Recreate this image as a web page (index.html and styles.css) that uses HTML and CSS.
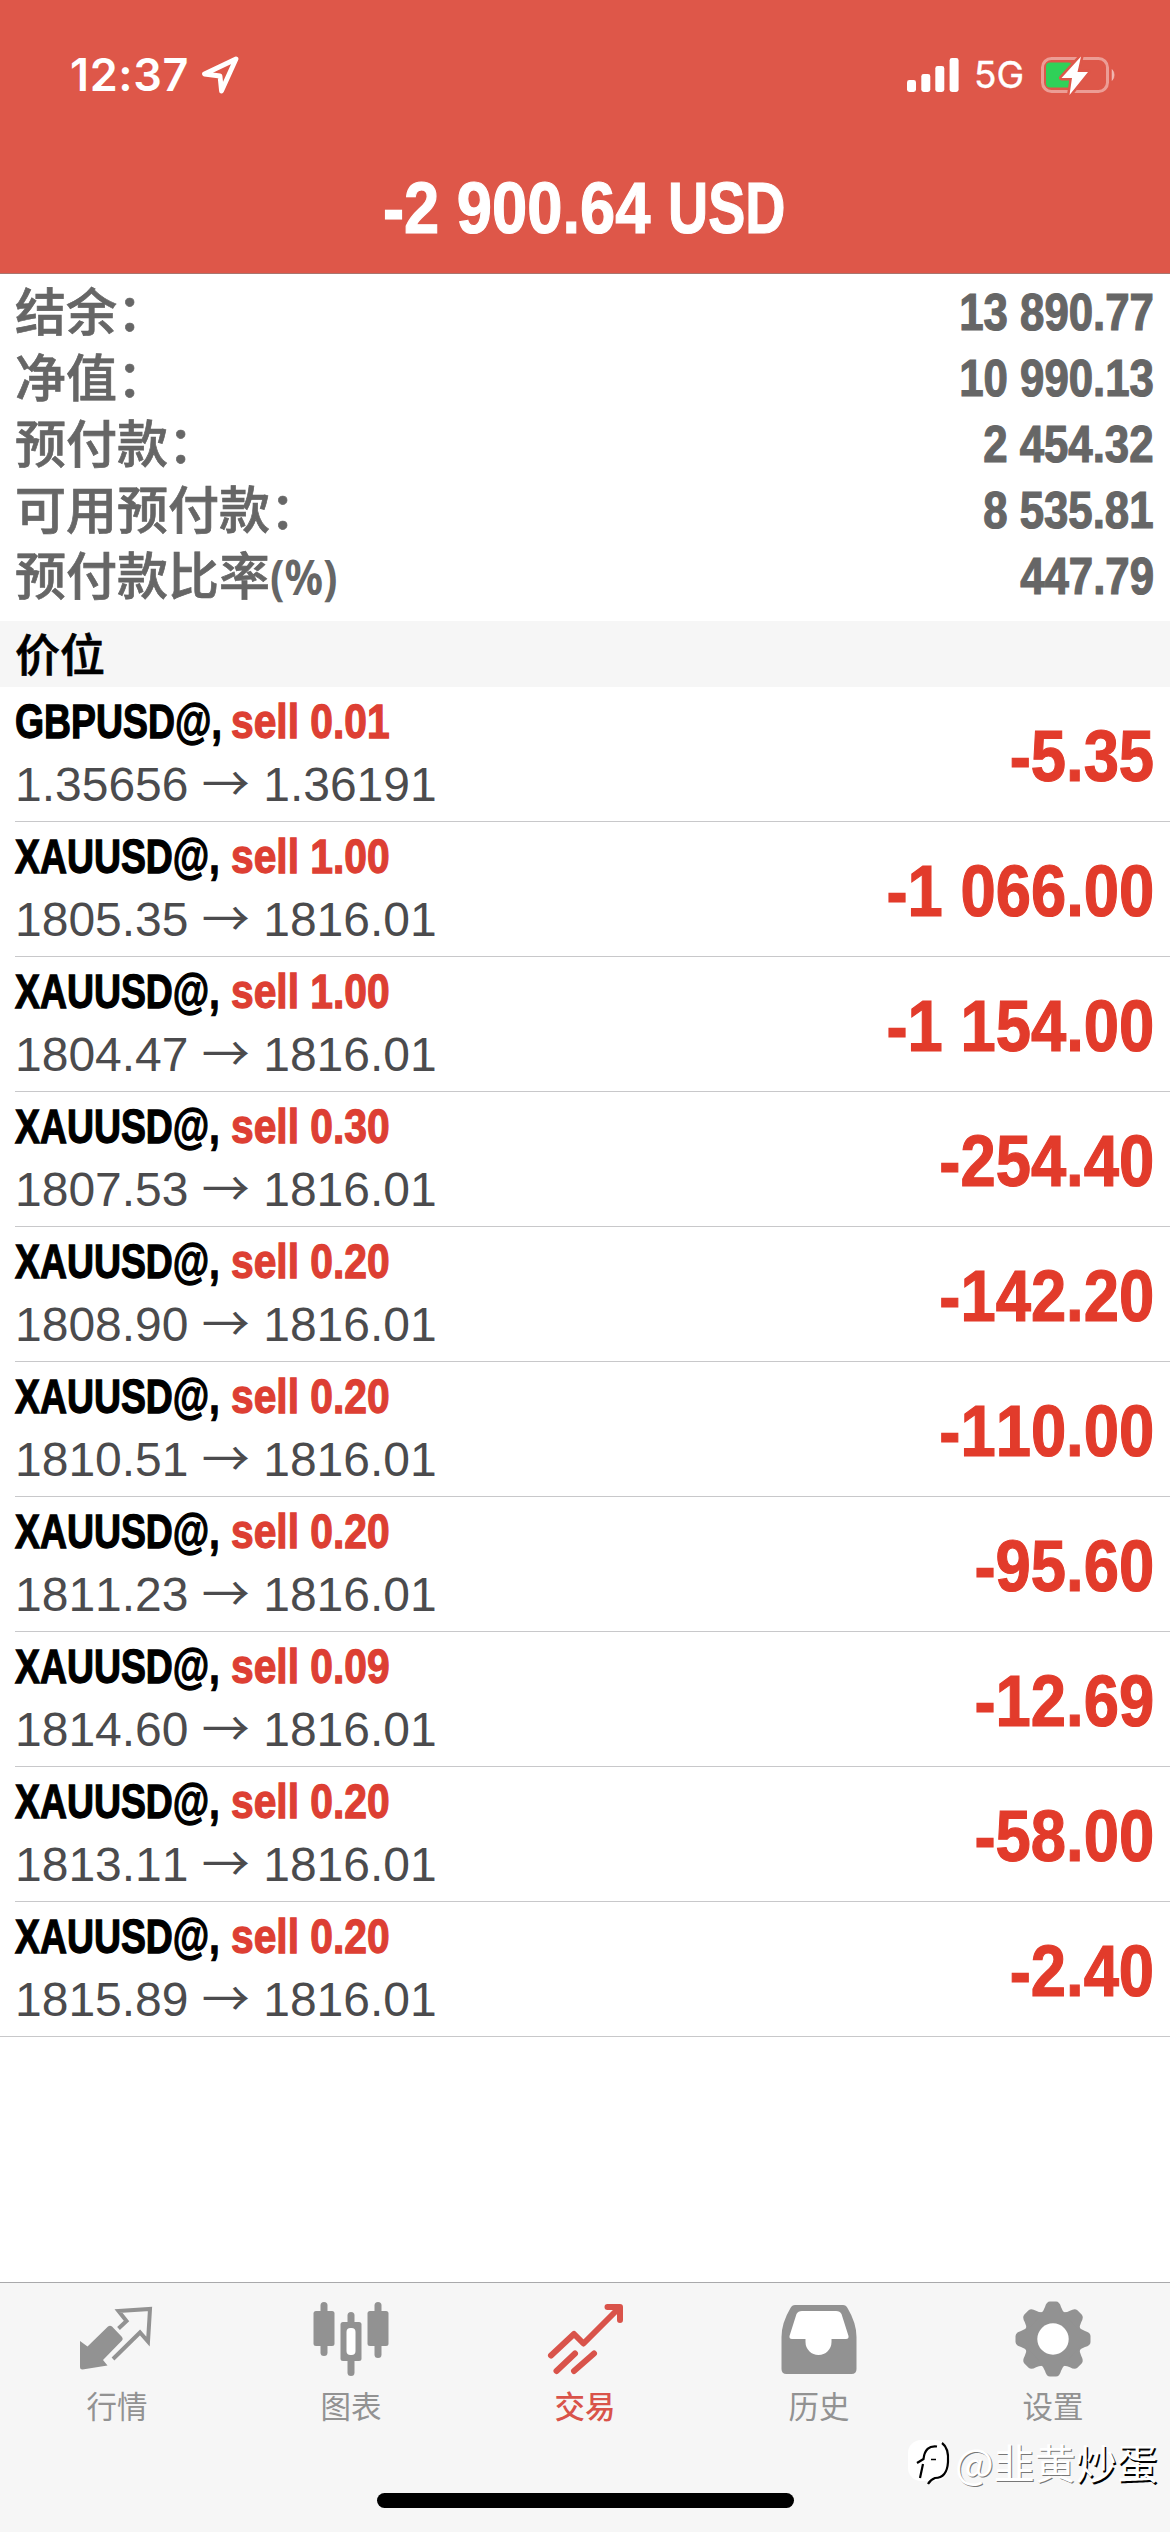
FILE: index.html
```html
<!DOCTYPE html>
<html lang="zh-CN">
<head>
<meta charset="utf-8">
<title>交易</title>
<link rel="stylesheet" href="styles.css">
</head>
<body>
<div class="app">
  <header class="header">
    <div class="status">
      <div class="status-left">
        <span class="clock">12:37</span>
        <svg class="loc" width="38" height="38" viewBox="0 0 38 38"><path d="M35 3 L3.500 18 L19 20 L20.500 35 Z" fill="none" stroke="#fff" stroke-width="4.800" stroke-linejoin="round"/></svg>
      </div>
      <div class="status-right">
        <svg class="signal" width="52" height="34" viewBox="0 0 52 34" fill="#fff"><rect x="0" y="22" width="9" height="12" rx="2.4"/><rect x="14.3" y="16" width="9" height="18" rx="2.4"/><rect x="28.3" y="8" width="9" height="26" rx="2.4"/><rect x="42.6" y="0" width="9" height="34" rx="2.4"/></svg>
        <span class="net">5G</span>
        <svg class="battery" width="78" height="42" viewBox="0 0 78 42"><rect x="2.5" y="4.5" width="65" height="33" rx="9" fill="none" stroke="#fff" stroke-opacity=".42" stroke-width="3"/><path d="M72 15.5 a8 8 0 0 1 0 11 Z" fill="#fff" fill-opacity=".5" stroke="#fff" stroke-opacity=".3"/><rect x="6" y="8.500" width="26" height="25" rx="4" fill="#30d158"/><path d="M41 2.500 L21.500 24 H32 L29.500 41 L48 18 H37.500 Z" fill="#fff" stroke="#de5749" stroke-width="5" paint-order="stroke" stroke-linejoin="round"/></svg>
      </div>
    </div>
    <h1 class="total"><span class="amount">-2 900.64</span><span class="currency">USD</span></h1>
  </header>

  <section class="summary">
    <div class="line"><span>结余：</span><b>13 890.77</b></div>
    <div class="line"><span>净值：</span><b>10 990.13</b></div>
    <div class="line"><span>预付款：</span><b>2 454.32</b></div>
    <div class="line"><span>可用预付款：</span><b>8 535.81</b></div>
    <div class="line"><span>预付款比率<i class="pct">(%)</i></span><b>447.79</b></div>
  </section>

  <h2 class="section">价位</h2>

  <ul class="list">
    <li><div class="info"><p class="deal"><b class="sym">GBPUSD@,</b><b class="side">sell 0.01</b></p><p class="price">1.35656 <i>→</i> 1.36191</p></div><b class="profit">-5.35</b></li>
    <li><div class="info"><p class="deal"><b class="sym">XAUUSD@,</b><b class="side">sell 1.00</b></p><p class="price">1805.35 <i>→</i> 1816.01</p></div><b class="profit">-1 066.00</b></li>
    <li><div class="info"><p class="deal"><b class="sym">XAUUSD@,</b><b class="side">sell 1.00</b></p><p class="price">1804.47 <i>→</i> 1816.01</p></div><b class="profit">-1 154.00</b></li>
    <li><div class="info"><p class="deal"><b class="sym">XAUUSD@,</b><b class="side">sell 0.30</b></p><p class="price">1807.53 <i>→</i> 1816.01</p></div><b class="profit">-254.40</b></li>
    <li><div class="info"><p class="deal"><b class="sym">XAUUSD@,</b><b class="side">sell 0.20</b></p><p class="price">1808.90 <i>→</i> 1816.01</p></div><b class="profit">-142.20</b></li>
    <li><div class="info"><p class="deal"><b class="sym">XAUUSD@,</b><b class="side">sell 0.20</b></p><p class="price">1810.51 <i>→</i> 1816.01</p></div><b class="profit">-110.00</b></li>
    <li><div class="info"><p class="deal"><b class="sym">XAUUSD@,</b><b class="side">sell 0.20</b></p><p class="price">1811.23 <i>→</i> 1816.01</p></div><b class="profit">-95.60</b></li>
    <li><div class="info"><p class="deal"><b class="sym">XAUUSD@,</b><b class="side">sell 0.09</b></p><p class="price">1814.60 <i>→</i> 1816.01</p></div><b class="profit">-12.69</b></li>
    <li><div class="info"><p class="deal"><b class="sym">XAUUSD@,</b><b class="side">sell 0.20</b></p><p class="price">1813.11 <i>→</i> 1816.01</p></div><b class="profit">-58.00</b></li>
    <li><div class="info"><p class="deal"><b class="sym">XAUUSD@,</b><b class="side">sell 0.20</b></p><p class="price">1815.89 <i>→</i> 1816.01</p></div><b class="profit">-2.40</b></li>
  </ul>

  <nav class="tabs">
    <a class="tab">
      <svg width="76" height="76" viewBox="0 0 76 76"><path d="M1 40 L8.5 45.5 L29 25.500 Q31 24 33 25.500 L43 36 Q44.500 38 43 39.500 L24 59 L28.500 64.500 L3.500 68.500 Q1 68.500 1 66 Z" fill="currentColor"/><path d="M39.500 27.500 L47.500 20 L39.500 10 L71 8 L69 40.500 L61 31.500 L34 58" fill="none" stroke="currentColor" stroke-width="4"/></svg>
      <span>行情</span>
    </a>
    <a class="tab">
      <svg width="76" height="76" viewBox="0 0 76 76" fill="currentColor"><rect x="7.500" y="1" width="7" height="54" rx="3.500"/><rect x="0.500" y="10" width="21" height="35" rx="2.500"/><rect x="34.500" y="11" width="7" height="64" rx="3.500"/><rect x="27.500" y="21" width="21" height="39" rx="2.500"/><rect x="61.500" y="1" width="7" height="56" rx="3.500"/><rect x="54.500" y="10" width="21" height="35" rx="2.500"/><rect x="33.500" y="27" width="9" height="27" rx="4" fill="#fff"/></svg>
      <span>图表</span>
    </a>
    <a class="tab active">
      <svg width="76" height="76" viewBox="0 0 76 76" fill="none" stroke="currentColor" stroke-width="6" stroke-linejoin="round" stroke-linecap="round"><path d="M4 54.500 L27 33 L36.500 42.500 L72 7 M60.500 6 H73 V19"/><path d="M9.500 70 L28 52.500 M27 70 L47 52.500"/></svg>
      <span>交易</span>
    </a>
    <a class="tab">
      <svg width="76" height="76" viewBox="0 0 76 76"><path fill="currentColor" d="M14 4 H62 Q65 4 66.500 7 Q75.500 22 75.500 36 V68 Q75.500 73 70.500 73 H5.500 Q0.500 73 0.500 68 V36 Q0.500 22 9.500 7 Q11 4 14 4 Z"/><path fill="#fff" d="M21 10 H55 Q59 10 60.500 13 L67.500 35 Q68 38 65 38 H50.500 V41 A13 13 0 0 1 24.500 41 V38 H11 Q8 38 8.500 35 L15.500 13 Q17 10 21 10 Z"/></svg>
      <span>历史</span>
    </a>
    <a class="tab">
      <svg width="76" height="76" viewBox="-38 -38 76 76" fill="currentColor"><circle r="28.500"/><path id="t" d="M-13 -25 Q-9 -28 -8 -32 Q-6.500 -37.500 -3 -37.500 H3 Q6.500 -37.500 8 -32 Q9 -28 13 -25 Z"/><use href="#t" transform="rotate(45)"/><use href="#t" transform="rotate(90)"/><use href="#t" transform="rotate(135)"/><use href="#t" transform="rotate(180)"/><use href="#t" transform="rotate(225)"/><use href="#t" transform="rotate(270)"/><use href="#t" transform="rotate(315)"/><circle r="15.700" fill="#fff"/></svg>
      <span>设置</span>
    </a>
  </nav>
  <div class="home"></div>
  <div class="mark">
    <svg width="47" height="50" viewBox="0 0 47 50"><rect x="0" y="4" width="40" height="41" rx="13" fill="#fff"/><path d="M34 7 Q41 12 40 26 Q39 42 27 42 Q22 44 20 48" fill="none" stroke="#000" stroke-width="2.200"/><path d="M29 10.500 Q17 9 15.500 23 L9 27 M15 28 L12 42" fill="none" stroke="#000" stroke-width="2.200"/><path d="M23 23.500 H28" stroke="#000" stroke-width="1.500"/></svg>
    <span class="soft">@韭黄</span><span class="hard">炒蛋</span>
  </div>
</div>
</body>
</html>
```
FILE: styles.css
```css
* { box-sizing: border-box; margin: 0; padding: 0; }
body { width: 1170px; height: 2532px; background: #fff; font-family: "Liberation Sans", "Noto Sans CJK SC", sans-serif; font-kerning: none; overflow: hidden; }
.app { position: relative; display: flex; flex-direction: column; width: 1170px; height: 2532px; }
i { font-style: normal; }

.header { height: 274px; background: #de5749; border-bottom: 1px solid #a8766f; color: #fff; display: flex; flex-direction: column; }
.status { display: flex; justify-content: space-between; height: 150px; padding: 0 52px 0 70px; align-items: center; font-family: Inter, sans-serif; }
.status-left, .status-right { display: flex; align-items: center; }
.clock { font-size: 45px; font-weight: 600; line-height: 50px; width: 131px; letter-spacing: .6px; white-space: nowrap; }
.net { font-size: 37px; width: 66px; margin-left: 15px; line-height: 50px; -webkit-text-stroke: .4px; }
.total { height: 116px; display: flex; align-items: center; padding-left: 383px; font-size: 73px; line-height: 84px; white-space: pre; -webkit-text-stroke: 1.2px; }
.amount { width: 285px; transform: scaleX(.867); transform-origin: left; }
.currency { transform: scaleX(.762); transform-origin: left; }

.summary { height: 347px; padding: 2px 16px 0 15px; color: #666; }
.line { display: flex; justify-content: space-between; height: 66px; align-items: center; font-family: "Noto Sans CJK SC", sans-serif; font-size: 51px; line-height: 66px; font-weight: 500; -webkit-text-stroke: .7px; }
.line b { font-family: "Liberation Sans", sans-serif; font-size: 51px; padding-top: 8px; transform: scaleX(.858); transform-origin: right; -webkit-text-stroke: 1.2px; }
.pct { display: inline-block; font: 700 48px/60px "Noto Sans", sans-serif; transform: scaleX(.89); transform-origin: left; -webkit-text-stroke: 0; }

.section { height: 66px; background: #f6f6f6; padding-left: 15px; font: 500 45px/63px "Noto Sans CJK SC", sans-serif; color: #000; -webkit-text-stroke: .7px; }

.list { list-style: none; }
.list li { display: flex; justify-content: space-between; height: 135px; margin-left: 15px; padding-right: 16px; border-bottom: 1px solid #c8c8ca; }
.list li:last-child { margin-left: 0; padding-left: 15px; }
.info { padding-top: 6px; }
.deal { display: flex; height: 56px; font-size: 49px; line-height: 56px; white-space: nowrap; -webkit-text-stroke: 1.3px; }
.sym { width: 216px; transform: scaleX(.763); transform-origin: left; color: #000; }
.side { transform: scaleX(.832); transform-origin: left; color: #dd3f33; }
.price { font-size: 48px; line-height: 68px; height: 68px; padding-top: 2px; color: #4b4b4d; white-space: nowrap; }
.price i { display: inline-block; width: 48px; font-family: "Noto Sans CJK SC", sans-serif; line-height: 48px; }
.profit { font-size: 72px; line-height: 139px; color: #e23b2b; transform: scaleX(.88); transform-origin: right; white-space: nowrap; -webkit-text-stroke: 1.2px; }

.tabs { margin-top: auto; height: 250px; border-top: 1px solid #a9a9ab; background: #f6f6f6; display: flex; }
.tab { flex: 1; display: flex; flex-direction: column; align-items: center; padding-top: 18px; color: #929292; font: 400 30.500px/44px "Noto Sans CJK SC", sans-serif; }
.tab span { margin-top: 6px; }
.active { color: #d9534a; font-weight: 500; }
.home { position: absolute; left: 377px; top: 2493px; width: 417px; height: 15px; border-radius: 8px; background: #000; }
.mark { position: absolute; left: 908px; top: 2438px; display: flex; align-items: center; height: 46px; color: #fff; font: 400 41px/46px "Noto Sans CJK SC", sans-serif; white-space: nowrap; }
.soft { text-shadow: 1px 1px 0 #777; }
.hard { text-shadow: 1.5px 1.5px 0 #000; }
```
